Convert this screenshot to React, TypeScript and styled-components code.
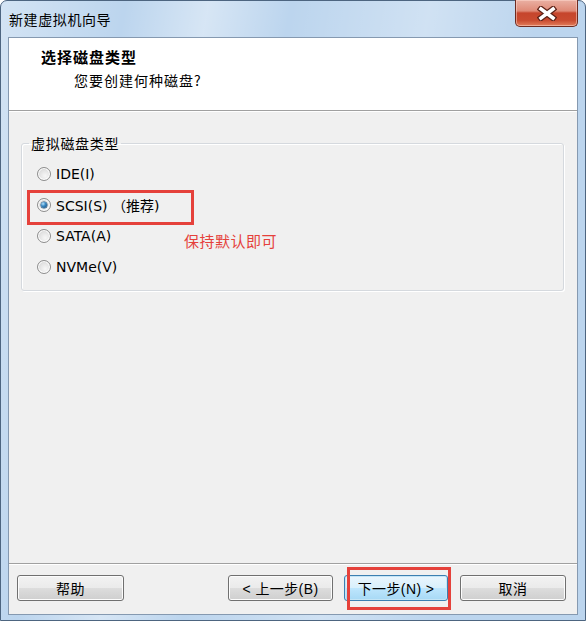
import React from 'react';
import styled, { createGlobalStyle } from 'styled-components';

const CJK = '"Noto Sans CJK SC", sans-serif';
const LATIN = '"DejaVu Sans", "Noto Sans CJK SC", sans-serif';

const GlobalStyle = createGlobalStyle`
    html, body {
        margin: 0;
        padding: 0;
        background: #ffffff;
    }
    * {
        box-sizing: border-box;
    }
`;

const Frame = styled.div`
    width: 586px;
    height: 621px;
    display: flex;
    flex-direction: column;
    padding: 0 7px 5px 7px;
    border: 1px solid #4d6580;
    border-radius: 7px 7px 0 0;
    background:
        linear-gradient(100deg, rgba(255, 255, 255, 0.35) 0%, rgba(255, 255, 255, 0) 18%, rgba(255, 255, 255, 0.4) 30%,
            rgba(255, 255, 255, 0) 42%, rgba(255, 255, 255, 0.3) 62%, rgba(255, 255, 255, 0) 78%),
        #bcd5ee;
`;

const TitleBar = styled.div`
    height: 36px;
    display: flex;
    align-items: flex-start;
    justify-content: space-between;
    padding-left: 1px;
`;

const Title = styled.div`
    margin-top: 10px;
    font-family: ${CJK};
    font-size: 14px;
    letter-spacing: 0.6px;
    line-height: 17px;
    color: #000;
`;

const CloseButton = styled.div`
    width: 63px;
    height: 27px;
    margin-top: -1px;
    display: flex;
    align-items: center;
    justify-content: center;
    border: 1px solid #6e2b20;
    border-top: none;
    border-radius: 0 0 5px 5px;
    background: linear-gradient(#eab0a3 0%, #df8a77 42%, #c6452c 50%, #c94b30 78%, #e27d5a 100%);
    box-shadow: inset 0 0 0 1px rgba(255, 220, 210, 0.5);
`;

const Client = styled.div`
    position: relative;
    flex: 1;
    display: flex;
    flex-direction: column;
    border: 1px solid #8599b0;
    background: #f0f0f0;
`;

const Header = styled.div`
    height: 73px;
    background: #ffffff;
    border-bottom: 1px solid #a0a0a0;
    box-shadow: 0 1px 0 #ffffff;
    padding: 9px 0 0 32px;
`;

const HeaderTitle = styled.div`
    font-family: ${CJK};
    font-weight: bold;
    font-size: 15px;
    letter-spacing: 1px;
    line-height: 20px;
    color: #000;
`;

const HeaderSub = styled.div`
    margin: 3px 0 0 33px;
    font-family: ${CJK};
    font-size: 14px;
    letter-spacing: 1px;
    line-height: 20px;
    color: #000;
`;

const Body = styled.div`
    flex: 1;
    padding: 24px 13px 0 12px;
`;

const GroupBox = styled.fieldset`
    margin: 0;
    padding: 0;
    border: 1px solid #d5d9de;
    border-radius: 3px;
    box-shadow: inset 1px 1px 0 #ffffff, 1px 1px 0 #ffffff;
`;

const Legend = styled.legend`
    margin-left: 7px;
    padding: 0 2px;
    font-family: ${CJK};
    font-size: 14px;
    letter-spacing: 0.7px;
    line-height: 17px;
    color: #000;
`;

const RadioList = styled.div`
    padding: 6px 0 8px 15px;
`;

const RadioRow = styled.label`
    height: 31px;
    display: flex;
    align-items: center;
    gap: 5px;
    font-family: ${LATIN};
    font-size: 14px;
    color: #000;
`;

const RadioCircle = styled.span<{ $checked?: boolean }>`
    position: relative;
    width: 14px;
    height: 14px;
    border-radius: 50%;
    border: 1px solid #8d8d8d;
    background: radial-gradient(circle at 60% 65%, #f7f7f7 0%, #e2e2e2 55%, #c9c9c9 100%);
    box-shadow: inset 0 0 0 1px #ffffff;

    &::after {
        content: '';
        display: ${(p) => (p.$checked ? 'block' : 'none')};
        position: absolute;
        left: 3px;
        top: 3px;
        width: 6px;
        height: 6px;
        border-radius: 50%;
        background: radial-gradient(circle at 35% 30%, #b7e3fb 0%, #3c8ac4 40%, #0e3f6c 100%);
        box-shadow: 0 0 0 0.5px #1c4a73;
    }
`;

const Note = styled.div`
    position: absolute;
    left: 175px;
    top: 192px;
    font-family: ${CJK};
    font-size: 15px;
    letter-spacing: 0.5px;
    color: #e5413b;
`;

const RedBox = styled.div`
    position: absolute;
    border: 3px solid #e5413b;
    pointer-events: none;
`;

const Footer = styled.div`
    height: 51px;
    display: flex;
    align-items: flex-start;
    padding: 11px 11px 0 8px;
    border-top: 1px solid #a0a0a0;
    box-shadow: inset 0 1px 0 #ffffff;
`;

const Button = styled.button<{ $primary?: boolean; $width: number; $push?: boolean }>`
    width: ${(p) => p.$width}px;
    height: 26px;
    margin-left: ${(p) => (p.$push ? 'auto' : '0')};
    padding: 0;
    border-radius: 3px;
    border: 1px solid ${(p) => (p.$primary ? '#3c7fb1' : '#707070')};
    background: ${(p) =>
        p.$primary
            ? 'linear-gradient(#eaf6fd 0%, #d9f0fc 48%, #bee6fd 50%, #a7d9f5 100%)'
            : 'linear-gradient(#f2f2f2 0%, #ebebeb 48%, #dddddd 50%, #cfcfcf 100%)'};
    box-shadow: inset 0 0 0 1px ${(p) => (p.$primary ? '#c4e5f6' : '#fcfcfc')};
    font-family: "Liberation Sans", "Noto Sans CJK SC", sans-serif;
    font-size: 14px;
    letter-spacing: 0.4px;
    color: #000;
`;

const CloseGlyph = () => (
    <svg width="20" height="15" viewBox="0 0 20 15">
        <path d="M4 3 L16 12 M16 3 L4 12" stroke="#5b2016" strokeWidth="6" strokeLinecap="square" fill="none" />
        <path d="M4 3 L16 12 M16 3 L4 12" stroke="#ffffff" strokeWidth="3.6" strokeLinecap="square" fill="none" />
    </svg>
);

const options = [
    { label: 'IDE(I)', checked: false },
    { label: 'SCSI(S) （推荐)', checked: true },
    { label: 'SATA(A)', checked: false },
    { label: 'NVMe(V)', checked: false },
];

export default function App() {
    return (
        <>
            <GlobalStyle />
            <Frame>
                <TitleBar>
                    <Title>新建虚拟机向导</Title>
                    <CloseButton>
                        <CloseGlyph />
                    </CloseButton>
                </TitleBar>
                <Client>
                    <Header>
                        <HeaderTitle>选择磁盘类型</HeaderTitle>
                        <HeaderSub>您要创建何种磁盘?</HeaderSub>
                    </Header>
                    <Body>
                        <GroupBox>
                            <Legend>虚拟磁盘类型</Legend>
                            <RadioList>
                                {options.map((o) => (
                                    <RadioRow key={o.label}>
                                        <RadioCircle $checked={o.checked} />
                                        {o.label}
                                    </RadioRow>
                                ))}
                            </RadioList>
                        </GroupBox>
                    </Body>
                    <Footer>
                        <Button $width={107}>帮助</Button>
                        <Button $width={105} $push>
                            &lt; 上一步(B)
                        </Button>
                        <Button $width={104} $primary style={{ marginLeft: 11 }}>
                            下一步(N) &gt;
                        </Button>
                        <Button $width={106} style={{ marginLeft: 12 }}>
                            取消
                        </Button>
                    </Footer>
                    <Note>保持默认即可</Note>
                    <RedBox style={{ left: 18, top: 152, width: 167, height: 35 }} />
                    <RedBox style={{ left: 338, top: 529, width: 104, height: 43 }} />
                </Client>
            </Frame>
        </>
    );
}
